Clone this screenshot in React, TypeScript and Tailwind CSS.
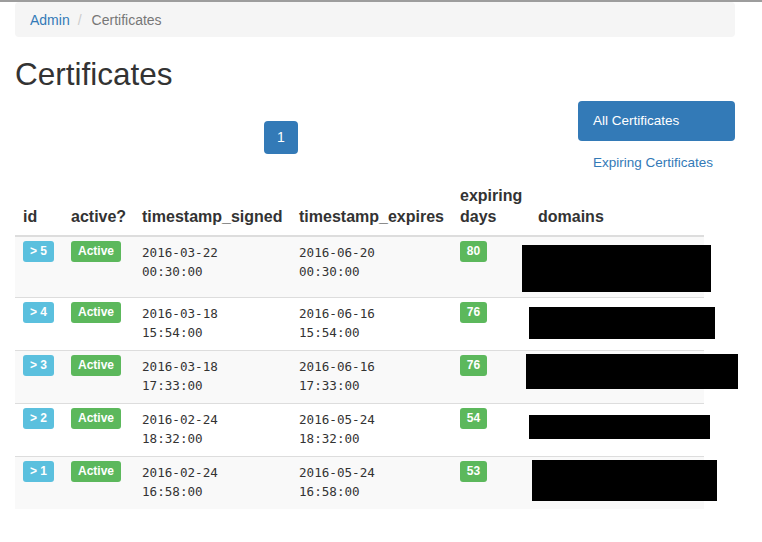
const rows = [
  { id: 5, signed: ['2016-03-22', '00:30:00'], expires: ['2016-06-20', '00:30:00'], days: 80, h: 'h-[60px]', box: 'left-[-8px] top-[8px] w-[189px] h-[47px]' },
  { id: 4, signed: ['2016-03-18', '15:54:00'], expires: ['2016-06-16', '15:54:00'], days: 76, h: 'h-[53px]', box: 'left-[-1px] top-[9px] w-[186px] h-[32px]' },
  { id: 3, signed: ['2016-03-18', '17:33:00'], expires: ['2016-06-16', '17:33:00'], days: 76, h: 'h-[53px]', box: 'left-[-4px] top-[3px] w-[212px] h-[35px]' },
  { id: 2, signed: ['2016-02-24', '18:32:00'], expires: ['2016-05-24', '18:32:00'], days: 54, h: 'h-[53px]', box: 'left-[-1px] top-[11px] w-[181px] h-[24px]' },
  { id: 1, signed: ['2016-02-24', '16:58:00'], expires: ['2016-05-24', '16:58:00'], days: 53, h: 'h-[53px]', box: 'left-[2px] top-[3px] w-[185px] h-[41px]' },
]

const cols = 'grid grid-cols-[48px_71px_157px_161px_78px_174px]'
const badge = 'h-[21px] rounded-[3px] flex items-center justify-center pb-px text-white text-[12px] font-bold leading-none'

export default function App() {
  return (
    <div className="min-h-screen bg-white border-t-2 border-[#9d9d9d] text-[#333] font-['Liberation_Sans',Arial,sans-serif]">
      <div className="ml-[15px] w-[720px]">
        <nav className="h-[35px] rounded bg-[#f5f5f5] px-[15px] flex items-center text-[14px] leading-5">
          <a className="text-[#337ab7]">Admin</a>
          <span className="ml-[8px] mr-[10px] text-[#ccc]">/</span>
          <span className="text-[#777]">Certificates</span>
        </nav>

        <h1 className="mt-[20px] mb-[10px] text-[31.5px] leading-[34px] font-medium">Certificates</h1>

        <div className="flex h-[76px]">
          <div className="w-[532px] flex justify-center pt-[20px]">
            <button className="w-[34px] h-[33px] rounded bg-[#337ab7] text-white text-[14px]">1</button>
          </div>
          <div className="ml-auto w-[157px] flex flex-col gap-[2px] text-[13.5px] leading-5">
            <a className="shrink-0 h-[40px] rounded bg-[#337ab7] text-white px-[15px] flex items-center">All Certificates</a>
            <a className="shrink-0 h-[40px] rounded text-[#337ab7] px-[15px] flex items-center">Expiring Certificates</a>
          </div>
        </div>

        <div className="w-[689px]">
          <div className={`${cols} items-end pt-2 pb-2 border-b-2 border-[#ddd] text-[16px] leading-[21px] font-bold`}>
            <div className="px-2">id</div>
            <div className="px-2">active?</div>
            <div className="px-2">timestamp_signed</div>
            <div className="px-2">timestamp_expires</div>
            <div className="px-2">expiring days</div>
            <div className="px-2">domains</div>
          </div>
          {rows.map((r, i) => (
            <div
              key={r.id}
              className={`${cols} ${r.h} ${i > 0 ? 'border-t border-[#ddd]' : ''} ${i % 2 === 0 ? 'bg-[#f9f9f9]' : ''}`}
            >
              <div className="pl-2 pt-[4px]">
                <div className={`${badge} w-[31px] bg-[#5bc0de]`}>&gt; {r.id}</div>
              </div>
              <div className="pl-2 pt-[4px]">
                <div className={`${badge} w-[50px] bg-[#5cb85c]`}>Active</div>
              </div>
              <div className="pl-2 pt-[7px] font-['DejaVu_Sans_Mono',monospace] text-[12.6px] leading-[18.5px]">
                <div>{r.signed[0]}</div>
                <div>{r.signed[1]}</div>
              </div>
              <div className="pl-2 pt-[7px] font-['DejaVu_Sans_Mono',monospace] text-[12.6px] leading-[18.5px]">
                <div>{r.expires[0]}</div>
                <div>{r.expires[1]}</div>
              </div>
              <div className="pl-2 pt-[4px]">
                <div className={`${badge} w-[27px] bg-[#5cb85c]`}>{r.days}</div>
              </div>
              <div className="relative">
                <div className={`absolute bg-black ${r.box}`} />
              </div>
            </div>
          ))}
        </div>
      </div>
    </div>
  )
}
